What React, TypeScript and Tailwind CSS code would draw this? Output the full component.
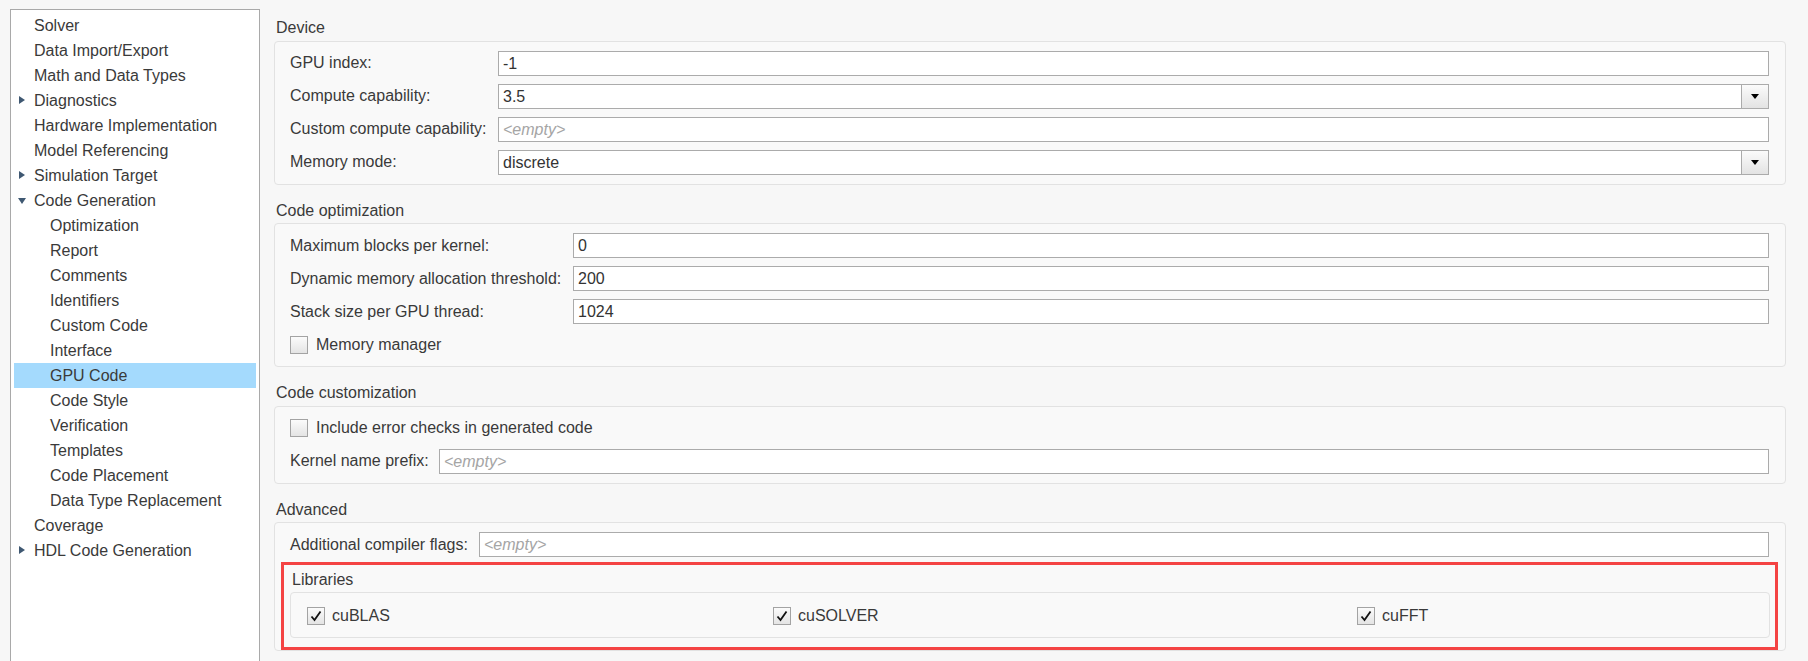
import type { ReactNode } from 'react'

const FONT = { fontFamily: '"Liberation Sans", Arial, sans-serif' }

type NavItem = { label: string; level: 1 | 2; arrow?: 'right' | 'down'; selected?: boolean }

const NAV: NavItem[] = [
  { label: 'Solver', level: 1 },
  { label: 'Data Import/Export', level: 1 },
  { label: 'Math and Data Types', level: 1 },
  { label: 'Diagnostics', level: 1, arrow: 'right' },
  { label: 'Hardware Implementation', level: 1 },
  { label: 'Model Referencing', level: 1 },
  { label: 'Simulation Target', level: 1, arrow: 'right' },
  { label: 'Code Generation', level: 1, arrow: 'down' },
  { label: 'Optimization', level: 2 },
  { label: 'Report', level: 2 },
  { label: 'Comments', level: 2 },
  { label: 'Identifiers', level: 2 },
  { label: 'Custom Code', level: 2 },
  { label: 'Interface', level: 2 },
  { label: 'GPU Code', level: 2, selected: true },
  { label: 'Code Style', level: 2 },
  { label: 'Verification', level: 2 },
  { label: 'Templates', level: 2 },
  { label: 'Code Placement', level: 2 },
  { label: 'Data Type Replacement', level: 2 },
  { label: 'Coverage', level: 1 },
  { label: 'HDL Code Generation', level: 1, arrow: 'right' },
]

function Sidebar() {
  return (
    <div className="ml-[10px] mt-[9px] w-[250px] shrink-0 border-l border-r border-t border-[#a9a9a9] bg-white px-[3px] pt-[3px]">
      {NAV.map(item => (
        <div
          key={item.label}
          className={`relative flex h-[25px] items-center text-[16px] leading-[25px] text-[#3a3a3a] ${
            item.level === 1 ? 'pl-[20px]' : 'pl-[36px]'
          } ${item.selected ? 'bg-[#a4dafd]' : ''}`}
        >
          {item.arrow === 'right' && (
            <span className="absolute left-[5px] top-[8px] h-0 w-0 border-b-[4.5px] border-l-[6px] border-t-[4.5px] border-b-transparent border-l-[#3f5872] border-t-transparent" />
          )}
          {item.arrow === 'down' && (
            <span className="absolute left-[4px] top-[10px] h-0 w-0 border-l-[4.5px] border-r-[4.5px] border-t-[6px] border-l-transparent border-r-transparent border-t-[#3f5872]" />
          )}
          {item.label}
        </div>
      ))}
    </div>
  )
}

function Section({ title, first, children, boxClass = 'pb-[9px]' }: { title: string; first?: boolean; children: ReactNode; boxClass?: string }) {
  return (
    <div className={first ? '' : 'mt-[16px]'}>
      <div className="pl-[2px] text-[16px] leading-[20px] text-[#3a3a3a]">{title}</div>
      <div className={`mt-[2.5px] flex flex-col gap-[8px] rounded-[4px] border border-[#e2e2e2] bg-[#f9f9f9] pl-[15px] pr-[16px] pt-[9px] ${boxClass}`}>
        {children}
      </div>
    </div>
  )
}

function TextInput({ value, placeholder }: { value?: string; placeholder?: boolean }) {
  return (
    <div className="h-[25px] flex-1 border border-[#ababab] bg-white px-[4px] text-[16px] leading-[23px]">
      {placeholder ? <span className="italic text-[#a5a5a5]">&lt;empty&gt;</span> : <span className="text-[#333]">{value}</span>}
    </div>
  )
}

function Dropdown({ value }: { value: string }) {
  return (
    <div className="flex h-[25px] flex-1 border border-[#ababab] bg-white text-[16px] leading-[23px]">
      <div className="flex-1 px-[4px] text-[#333]">{value}</div>
      <div className="flex w-[27px] items-center justify-center border-l border-[#ababab] bg-linear-to-b from-[#fbfbfb] to-[#e3e3e3]">
        <span className="h-0 w-0 border-l-[4px] border-r-[4px] border-t-[5px] border-l-transparent border-r-transparent border-t-black" />
      </div>
    </div>
  )
}

function Field({ label, width, children }: { label: string; width: string; children: ReactNode }) {
  return (
    <div className="flex h-[25px] items-center">
      <div className={`${width} shrink-0 whitespace-nowrap text-[16px] text-[#3a3a3a]`}>{label}</div>
      {children}
    </div>
  )
}

function Checkbox({ checked, label, gap = 'gap-[8px]' }: { checked?: boolean; label: string; gap?: string }) {
  return (
    <div className={`flex h-[25px] items-center ${gap}`}>
      <div className="flex h-[18px] w-[18px] items-center justify-center border border-[#a3a3a3] bg-linear-to-b from-[#fbfbfb] to-[#e4e4e4]">
        {checked && (
          <svg width="12" height="12" viewBox="0 0 12 12">
            <path d="M1.5 6.5 L4.5 10 L10.5 1.5" fill="none" stroke="#111" strokeWidth="1.8" strokeLinejoin="miter" />
          </svg>
        )}
      </div>
      <span className="text-[16px] text-[#3a3a3a]">{label}</span>
    </div>
  )
}

export default function App() {
  return (
    <div className="flex h-[661px] w-[1808px] overflow-hidden bg-[#f7f7f7]" style={FONT}>
      <Sidebar />

      <div className="flex-1 pl-[14px] pr-[22px] pt-[18px]">
        <Section title="Device" first>
          <Field label="GPU index:" width="w-[208px]">
            <TextInput value="-1" />
          </Field>
          <Field label="Compute capability:" width="w-[208px]">
            <Dropdown value="3.5" />
          </Field>
          <Field label="Custom compute capability:" width="w-[208px]">
            <TextInput placeholder />
          </Field>
          <Field label="Memory mode:" width="w-[208px]">
            <Dropdown value="discrete" />
          </Field>
        </Section>

        <Section title="Code optimization">
          <Field label="Maximum blocks per kernel:" width="w-[283px]">
            <TextInput value="0" />
          </Field>
          <Field label="Dynamic memory allocation threshold:" width="w-[283px]">
            <TextInput value="200" />
          </Field>
          <Field label="Stack size per GPU thread:" width="w-[283px]">
            <TextInput value="1024" />
          </Field>
          <Checkbox label="Memory manager" />
        </Section>

        <Section title="Code customization">
          <Checkbox label="Include error checks in generated code" />
          <Field label="Kernel name prefix:" width="w-[149px]">
            <TextInput placeholder />
          </Field>
        </Section>

        <Section title="Advanced" boxClass="pb-0">
          <Field label="Additional compiler flags:" width="w-[189px]">
            <TextInput placeholder />
          </Field>
          <div className="-ml-[9px] -mr-[9px] -mt-[3px] border-[3px] border-[#f44343] pb-[9px] pl-[6px] pr-[5px] pt-[5px]">
            <div className="pl-[2px] text-[16px] leading-[20px] text-[#3a3a3a]">Libraries</div>
            <div className="mt-[2px] grid grid-cols-[466px_584px_1fr] rounded-[4px] border border-[#e2e2e2] bg-[#f9f9f9] pb-[9px] pl-[16px] pt-[10px]">
              <Checkbox checked label="cuBLAS" gap="gap-[7px]" />
              <Checkbox checked label="cuSOLVER" gap="gap-[7px]" />
              <Checkbox checked label="cuFFT" gap="gap-[7px]" />
            </div>
          </div>
        </Section>
      </div>
    </div>
  )
}
